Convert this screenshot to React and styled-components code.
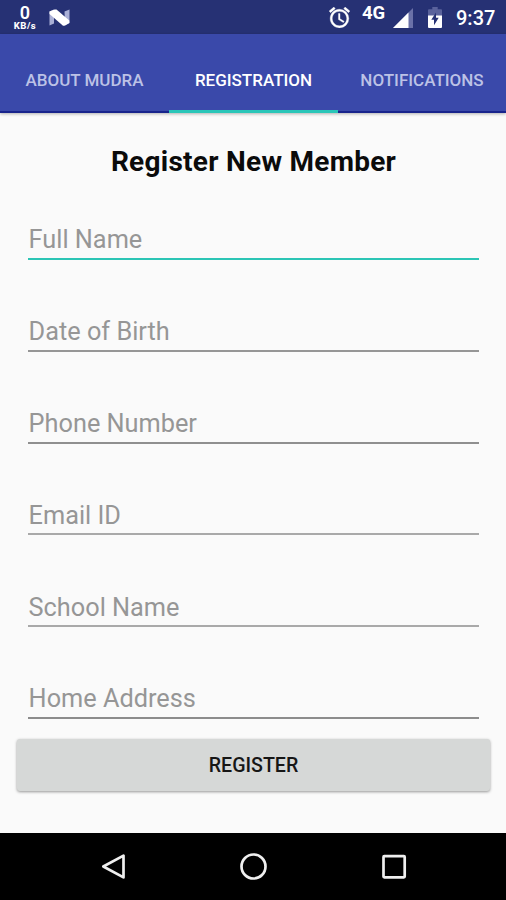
import React from "react";
import styled, { createGlobalStyle } from "styled-components";

const tabs = [
  { label: "ABOUT MUDRA" },
  { label: "REGISTRATION", active: true },
  { label: "NOTIFICATIONS" },
];

const fields = [
  { label: "Full Name", line: "#2cc5b5" },
  { label: "Date of Birth", line: "#969696" },
  { label: "Phone Number", line: "#8f8f8f" },
  { label: "Email ID", line: "#a9a9a9" },
  { label: "School Name", line: "#a9a9a9" },
  { label: "Home Address", line: "#8c8c8c" },
];

const App = () => {
  return (
    <>
      <GlobalStyle />
      <Screen>
        <StatusBar>
          <Speed>
            <SpeedValue>0</SpeedValue>
            <SpeedUnit>KB/s</SpeedUnit>
          </Speed>
          <NougatIcon viewBox="0 0 21 17">
            <path d="M.5 2.6L5 .5V14.5L.5 16.5zM15.5 2.5L20.5 .5V14L16 16.5z" fill="#a9afd6" />
            <path d="M.5 2.6L5.5 .4H7.5L20.3 11.5V14L15.5 16.7H14L.5 5z" fill="#fff" />
          </NougatIcon>
          <Spacer />
          <AlarmIcon viewBox="2 1.8 20 20.3">
            <path
              fill="#fff"
              stroke="#fff"
              strokeWidth=".35"
              d="M22 5.72l-4.6-3.86-1.29 1.53 4.6 3.86L22 5.72zM7.88 3.39L6.6 1.86 2 5.71l1.29 1.53 4.59-3.85zM12.5 8H11v6l4.75 2.85.75-1.23-4-2.37V8zM12 4c-4.97 0-9 4.03-9 9s4.02 9 9 9a9 9 0 0 0 0-18zm0 16c-3.87 0-7-3.13-7-7s3.13-7 7-7 7 3.13 7 7-3.13 7-7 7z"
            />
          </AlarmIcon>
          <Network>4G</Network>
          <SignalIcon viewBox="0 0 20 20">
            <path d="M0 20L20 0V20z" fill="#6a71a8" />
            <path d="M0 20L15.5 4.5V20z" fill="#fff" />
          </SignalIcon>
          <BatteryIcon viewBox="0 0 14 21">
            <path d="M4.3 0h5.4v2.2H13a1 1 0 0 1 1 1V9H0V3.2a1 1 0 0 1 1-1h3.3z" fill="#5a629c" />
            <path d="M0 8.5h14V20a1 1 0 0 1-1 1H1a1 1 0 0 1-1-1z" fill="#fff" />
            <path d="M8 5.5v5.3h2.7L6 18.2v-5.4H3.3z" fill="#263174" />
          </BatteryIcon>
          <Clock>9:37</Clock>
        </StatusBar>

        <TabBar>
          {tabs.map((tab) => (
            <Tab key={tab.label} $active={tab.active}>
              {tab.label}
            </Tab>
          ))}
        </TabBar>

        <Form>
          <Heading>Register New Member</Heading>
          <Fields>
            {fields.map((field) => (
              <Field key={field.label} $line={field.line}>
                {field.label}
              </Field>
            ))}
          </Fields>
          <RegisterButton>REGISTER</RegisterButton>
        </Form>

        <NavBar>
          <NavIcon viewBox="0 0 30 30">
            <path d="M24.5 3.6V25.4L4.3 14.5z" />
          </NavIcon>
          <NavIcon viewBox="0 0 30 30">
            <circle cx="14.5" cy="14.5" r="12" />
          </NavIcon>
          <NavIcon viewBox="0 0 30 30">
            <rect x="4.5" y="4.2" width="21.2" height="21.2" rx=".8" />
          </NavIcon>
        </NavBar>
      </Screen>
    </>
  );
};

const GlobalStyle = createGlobalStyle`
  * {
    box-sizing: border-box;
  }

  body {
    margin: 0;
    font-family: Roboto, sans-serif;
  }
`;

const Screen = styled.div`
  width: 506px;
  height: 900px;
  display: flex;
  flex-direction: column;
  background-color: #fafafa;
  overflow: hidden;
`;

const StatusBar = styled.header`
  display: flex;
  align-items: flex-start;
  height: 34px;
  padding: 0 11px 0 12px;
  background-color: #263174;
  color: #fff;
  flex-shrink: 0;
`;

const Speed = styled.div`
  display: flex;
  flex-direction: column;
  align-items: center;
  width: 26px;
  padding-top: 3px;
`;

const SpeedValue = styled.span`
  font-size: 18px;
  font-weight: 600;
  line-height: 19px;
`;

const SpeedUnit = styled.span`
  font-size: 9.5px;
  font-weight: 800;
  line-height: 7px;
  letter-spacing: 0.5px;
`;

const NougatIcon = styled.svg`
  width: 21px;
  height: 17px;
  margin: 9px 0 0 11px;
`;

const Spacer = styled.div`
  flex: 1;
`;

const AlarmIcon = styled.svg`
  width: 21px;
  height: 21px;
  margin-top: 7px;
`;

const Network = styled.span`
  width: 25px;
  margin: 4px 6px 0 12px;
  font-size: 18.5px;
  font-weight: 700;
  line-height: 18px;
`;

const SignalIcon = styled.svg`
  width: 20px;
  height: 20px;
  margin-top: 8px;
`;

const BatteryIcon = styled.svg`
  width: 14px;
  height: 21px;
  margin: 7px 14px 0 15px;
`;

const Clock = styled.span`
  width: 39px;
  margin-top: 7px;
  font-size: 20px;
  font-weight: 500;
  line-height: 23px;
`;

const TabBar = styled.nav`
  display: grid;
  grid-template-columns: 169px 169px 168px;
  height: 79px;
  background-color: #3a49aa;
  box-shadow: 0 1px 3px rgba(0, 0, 0, 0.3);
  flex-shrink: 0;
`;

const Tab = styled.div`
  display: flex;
  justify-content: center;
  padding-top: 35px;
  border-bottom: ${({ $active }) => ($active ? "3px solid #2ac6b8" : "2px solid #18248c")};
  color: ${({ $active }) => ($active ? "#fff" : "#bcc2e6")};
  font-size: 17px;
  font-weight: 500;
  line-height: 22px;
  white-space: nowrap;
`;

const Form = styled.main`
  display: flex;
  flex-direction: column;
  height: 720px;
  padding: 33px 16px 0 17px;
`;

const Heading = styled.h1`
  margin: 0 0 34px;
  color: #0b0b0b;
  font-size: 28px;
  font-weight: 700;
  line-height: 32px;
  letter-spacing: 0.27px;
  text-align: center;
`;

const Fields = styled.div`
  display: grid;
  grid-template-rows: repeat(6, 48px);
  row-gap: 43.8px;
  padding: 0 11px;
`;

const Field = styled.div`
  padding: 12.4px 0 0 0.6px;
  border-bottom: 2px solid ${({ $line }) => $line};
  color: #969696;
  font-size: 25.3px;
  line-height: 32px;
`;

const RegisterButton = styled.button`
  height: 52px;
  margin: 20px 0 0;
  padding: 2px 0 0;
  border: none;
  border-radius: 3px;
  background-color: #d6d8d7;
  box-shadow: 0 1px 3px rgba(0, 0, 0, 0.4);
  color: #161616;
  font-family: inherit;
  font-size: 19.6px;
  font-weight: 500;
`;

const NavBar = styled.footer`
  display: flex;
  justify-content: space-between;
  height: 67px;
  padding: 19px 97px 0 99px;
  background-color: #000;
`;

const NavIcon = styled.svg`
  width: 30px;
  height: 30px;
  fill: none;
  stroke: #efefef;
  stroke-width: 2.7;
  stroke-linejoin: round;
`;

export default App;
